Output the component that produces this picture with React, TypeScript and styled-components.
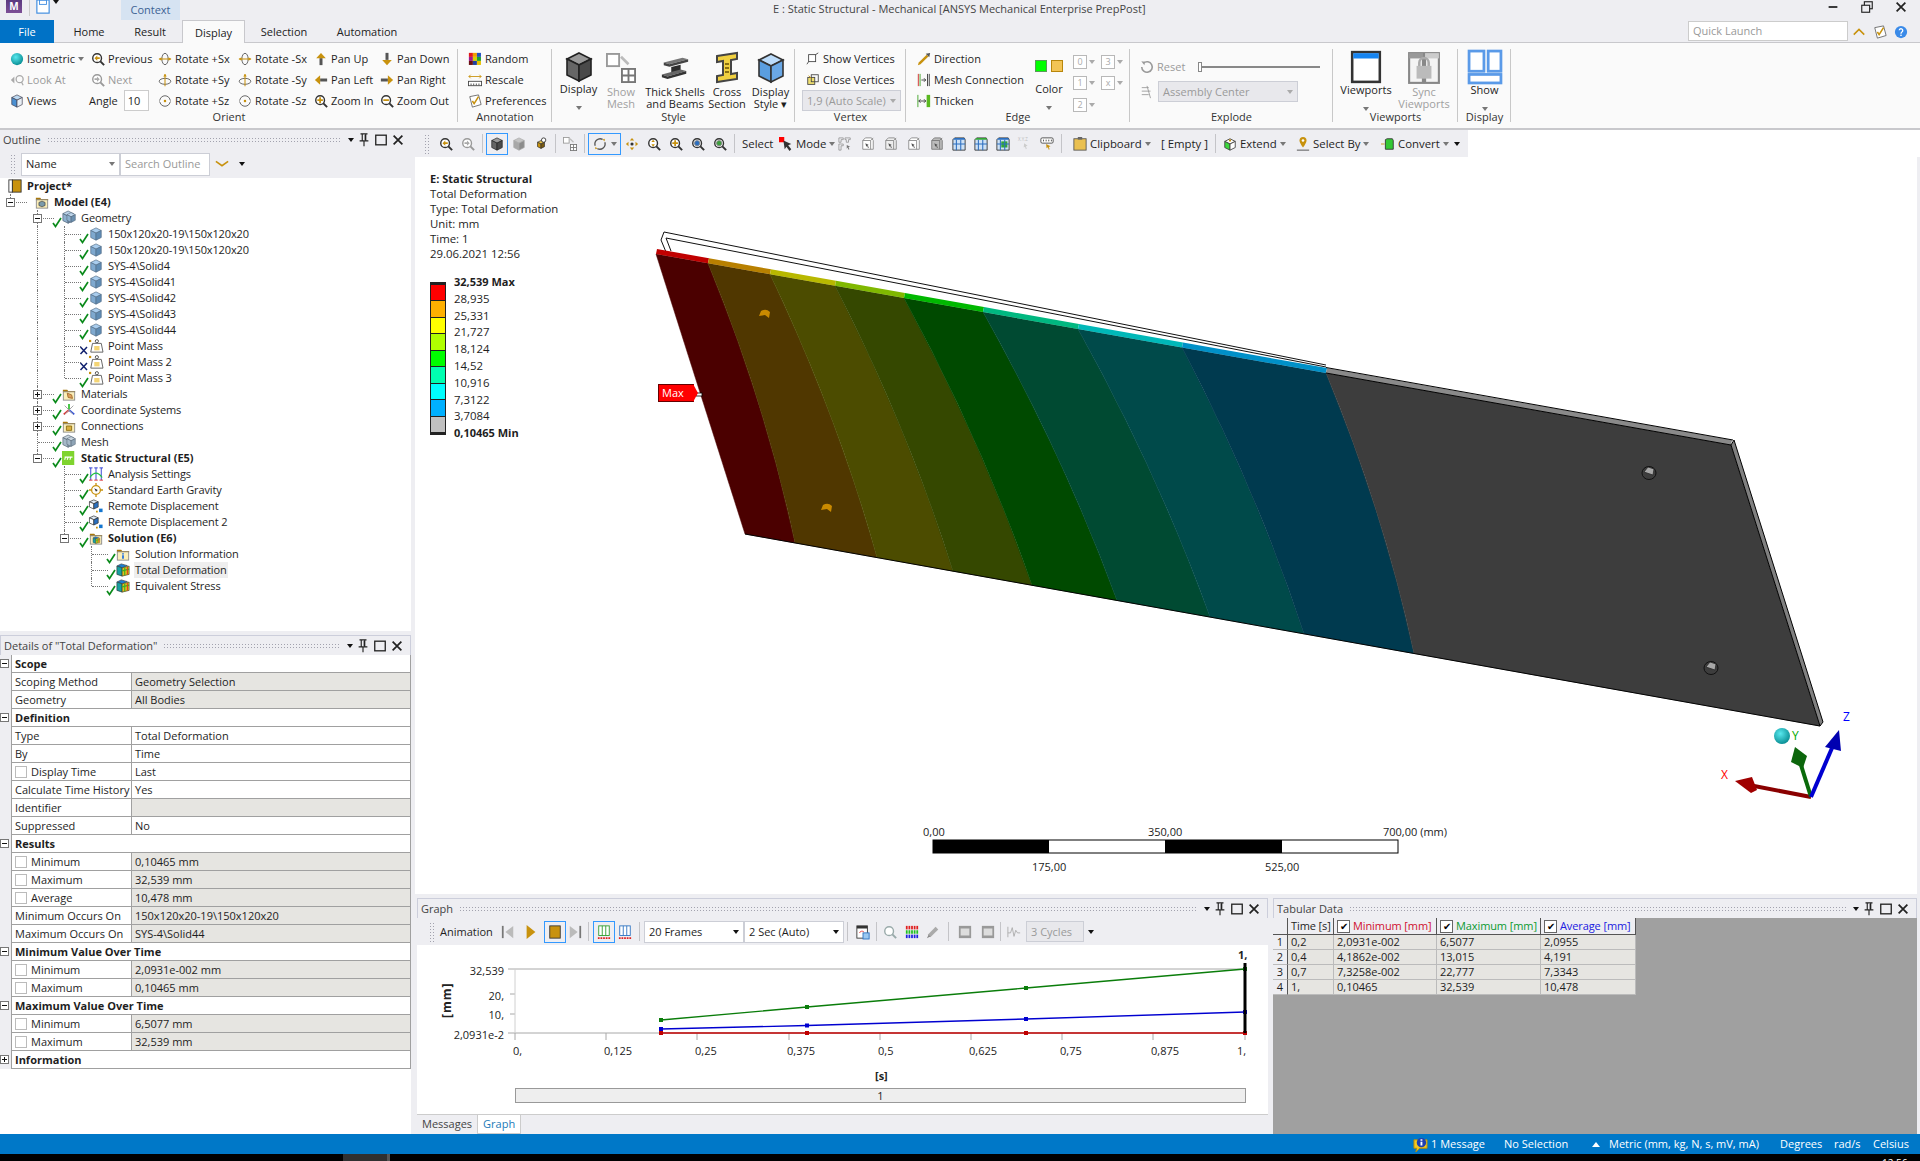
import React from "react";
import styled, { createGlobalStyle } from "styled-components";

const FONT = `"Open Sans", "Noto Sans", "Liberation Sans", sans-serif`;
const GOLD = "#c8920e";
const DARK = "#333";

const Global = createGlobalStyle`
  html, body { margin: 0; padding: 0; background: #eeeef2; }
  body { font: 11px/14px ${FONT}; color: #1e1e1e; overflow: hidden; }
  * { box-sizing: border-box; }
`;

const Shell = styled.div`
  width: 1920px;
  height: 1161px;
  display: flex;
  flex-direction: column;
  background: #eeeef2;
  overflow: hidden;
`;

/* ---------- icons ---------- */

const IconSvg = styled.svg<{ $s: number }>`
  width: ${(p) => p.$s}px;
  height: ${(p) => p.$s}px;
  flex: none;
  display: block;
  overflow: visible;
`;

const mag = (inner: React.ReactNode, c = DARK) => (
  <>
    <circle cx="7" cy="7" r="5" fill="#fff" stroke={c} strokeWidth="1.6" />
    <path d="M10.7 10.7L15 15" stroke={c} strokeWidth="2.2" />
    {inner}
  </>
);
const cube = (top: string, left: string, right: string, line = "#444") => (
  <>
    <path d="M8 1l6 3-6 3-6-3z" fill={top} stroke={line} strokeWidth=".8" />
    <path d="M2 4l6 3v8l-6-3z" fill={left} stroke={line} strokeWidth=".8" />
    <path d="M14 4l-6 3v8l6-3z" fill={right} stroke={line} strokeWidth=".8" />
  </>
);
const folder = (inner: React.ReactNode) => (
  <>
    <path d="M1 3h5l1 1.5h8V6H1z" fill="#a8780c" />
    <rect x="1.5" y="5.5" width="13" height="9.5" fill="#fbeeb8" stroke="#888" />
    {inner}
  </>
);
const rotX = (
  <>
    <ellipse cx="8" cy="8" rx="3.6" ry="6.5" fill="none" stroke="#555" />
    <path d="M1 8h14" stroke={GOLD} strokeWidth="1.2" />
    <path d="M1 8l3-2v4zM15 8l-3-2v4z" fill={GOLD} />
  </>
);
const rotY = (
  <>
    <ellipse cx="8" cy="9.5" rx="6.6" ry="3.4" fill="none" stroke="#555" />
    <path d="M8 1v14" stroke={GOLD} strokeWidth="1.2" />
    <path d="M8 1L6 4h4z" fill={GOLD} />
  </>
);
const rotZ = (
  <>
    <circle cx="8" cy="8" r="6" fill="none" stroke="#555" />
    <path d="M2 8h3M11 8h3" stroke="#fff" strokeWidth="2" />
    <circle cx="8" cy="8" r="1.4" fill={GOLD} />
  </>
);
const rainbow = (
  <>
    <path d="M6 1l7 2-6 2.5L1 3.5z" fill="#1c7fd0" stroke="#333" strokeWidth=".7" />
    <path d="M1 3.5l6 2V15l-6-2z" fill="#16a0a0" stroke="#333" strokeWidth=".7" />
    <path d="M7 5.5l8-2V13l-8 2z" fill="#e2c21b" stroke="#333" strokeWidth=".7" />
    <path d="M10 5v9M7 9l8-2" stroke="#3caf24" strokeWidth="1.3" />
    <path d="M13 4.5V13" stroke="#e23b1c" strokeWidth="1.2" />
  </>
);
const selectFrame = (fill: string, line: string) => (
  <>
    <path d="M2 4l3-3h7l2 3v10H2z" fill={fill} stroke={line} />
    <path d="M2 4h9l3-3M11 4v10" fill="none" stroke={line} />
    <path d="M5 7l4 2-1.500.5L9 12l-1 .5-1-2.500-1 1z" fill="#555" />
  </>
);
const barSet = (c: string) => (
  <>
    <rect x="2" y="1" width="12" height="11" fill="#fff" stroke={c} />
    <path d="M6 1v11M10 1v11" stroke={c} />
    <path d="M1 15h14" stroke="#e02020" strokeDasharray="2 1" strokeWidth="2" />
  </>
);
const partGrid = (top: string, dense?: boolean) => (
  <>
    <path d="M1 3l2-2h11l1 2v12H1z" fill="#cfe2f5" stroke="#333" />
    <path d="M3 1h11l1 2H1z" fill={top} />
    {dense && <rect x="6" y="5" width="7" height="7" fill="#33a833" />}
    <path d="M5 3v12M10 3v12M1 8h14" stroke="#2c6fc0" strokeWidth="1.200" />
  </>
);

const glyphs: Record<string, React.ReactNode> = {
  sphere: <circle cx="8" cy="8" r="7" fill="url(#sph)" />,
  prev: mag(<path d="M4 7l3.200-3v2H10v2H7.200v2z" fill={GOLD} />),
  next: mag(<path d="M10 7L6.800 4v2H4v2h2.800v2z" fill="#aaa" />, "#999"),
  zIn: mag(<path d="M6 3.800h2V6h2.200v2H8v2.200H6V8H3.800V6H6z" fill={GOLD} />),
  zOut: mag(<rect x="3.800" y="6" width="6.400" height="2" fill={GOLD} />),
  zFit: mag(<path d="M7 3l2 2.600H5zM7 11L5 8.400h4z" fill={GOLD} />),
  zBlue: mag(<circle cx="7" cy="7" r="3" fill="#2c6fc0" stroke="#888" />),
  zGreen: mag(<circle cx="7" cy="7" r="3" fill="#3ca03c" stroke="#888" />),
  rotSx: rotX,
  rotSy: rotY,
  rotSz: rotZ,
  panUp: <><rect x="6.300" y="7" width="3.400" height="8" fill="#555" /><path d="M8 1l5.500 6h-11z" fill={GOLD} /></>,
  panDown: <><rect x="6.300" y="1" width="3.400" height="8" fill="#555" /><path d="M8 15l5.500-6h-11z" fill={GOLD} /></>,
  panLeft: <><rect x="7" y="6.300" width="8" height="3.400" fill="#555" /><path d="M1 8l6-5.500v11z" fill={GOLD} /></>,
  panRight: <><rect x="1" y="6.300" width="8" height="3.400" fill="#555" /><path d="M15 8L9 2.500v11z" fill={GOLD} /></>,
  random: (
    <>
      {["#e01818", "#f0a000", "#2050c0", "#a01890", "#d8d000", "#20a030", "#6a1010", "#2040a0", "#e8c000"].map(
        (c, i) => (
          <rect key={i} x={1 + (i % 3) * 4.600} y={1 + Math.floor(i / 3) * 4.600} width="4.600" height="4.600" fill={c} />
        )
      )}
    </>
  ),
  rescale: (
    <>
      <path d="M1 4h14M1 4l2-2M1 4l2 2M15 4l-2-2M15 4l-2 2" stroke={GOLD} fill="none" />
      <rect x=".5" y="9.500" width="15" height="5" fill="#fff" stroke="#444" />
      <path d="M3.500 12v2M6.500 12v2M9.500 12v2M12.500 12v2" stroke="#444" />
    </>
  ),
  prefs: (
    <>
      <path d="M2 3l10-2 3 11-10 3z" fill="#fff" stroke="#666" />
      <path d="M5 8l2 3 5-8" fill="none" stroke={GOLD} strokeWidth="1.800" />
    </>
  ),
  views: cube("#bcd9f2", "#4a90d2", "#e8eef4", "#445"),
  lookAt: (
    <>
      <circle cx="11" cy="7" r="4" fill="none" stroke="#aaa" strokeWidth="1.500" />
      <path d="M1 8l4-4v8z" fill="#aaa" />
      <path d="M13 10l2 4" stroke="#aaa" strokeWidth="1.500" />
    </>
  ),
  cubeDark: cube("#9a9a9a", "#666", "#4a4a4a", "#222"),
  cubeGray: cube("#c4c4c4", "#a8a8a8", "#8c8c8c", "#aaa"),
  cubeParts: (
    <>
      <path d="M4 6l4-2 4 2-4 2z" fill="#e8c24a" stroke="#333" strokeWidth=".8" />
      <path d="M4 6v5l4 2V8z" fill={GOLD} stroke="#333" strokeWidth=".8" />
      <path d="M12 6v5l-4 2V8z" fill="#7a5a10" stroke="#333" strokeWidth=".8" />
      <circle cx="11" cy="3.500" r="2.500" fill="#fff" stroke="#333" />
    </>
  ),
  showMesh: (
    <>
      <rect x=".5" y=".5" width="6.500" height="6.500" fill="#fff" stroke="#999" />
      <rect x="8.500" y="8.500" width="7" height="7" fill="#fff" stroke="#777" />
      <path d="M12 8.500v7M8.500 12h7" stroke="#777" />
      <path d="M8 2l4 4" stroke="#bbb" strokeWidth="1.400" />
    </>
  ),
  rotate: (
    <>
      <path d="M2.500 10A6 6 0 0 1 11 2.800" fill="none" stroke="#555" strokeWidth="1.500" />
      <path d="M13.500 6A6 6 0 0 1 5 13.200" fill="none" stroke="#555" strokeWidth="1.500" />
      <path d="M11 2.800l2.500-.8-.3 3zM5 13.200l-2.500.8.3-3z" fill={GOLD} />
    </>
  ),
  pan: (
    <>
      <path d="M8 1l2.500 3h-5zM8 15l-2.500-3h5zM1 8l3-2.500v5zM15 8l-3 2.500v-5z" fill={GOLD} />
      <circle cx="8" cy="8" r="1.800" fill="#333" />
    </>
  ),
  mode: (
    <>
      <rect x="0" y="0" width="6" height="6" fill="#f00" />
      <path d="M5 4l9 4-3.500 1.500L14 14l-2 2-3.500-5L6.500 14z" fill="#333" />
    </>
  ),
  selGrid: (
    <>
      <path d="M1 1h5v2H3.500v3H1zM8 1h6v2h-2v3H9.500V3H8zM1 8h5v2H3.500v5H1z" fill="none" stroke="#888" strokeWidth=".8" />
      <path d="M10 9l4 2-2 .5 1 2.500-1 .5-1-2.500-1 1.500z" fill="#777" />
    </>
  ),
  sel0: selectFrame("#fff", "#888"),
  sel1: selectFrame("#eee", "#888"),
  sel3: selectFrame("#bbb", "#777"),
  gridBlue: partGrid("#2c6fc0"),
  gridGreen: partGrid("#33a833"),
  gridDense: partGrid("#2c6fc0", true),
  xyz: (
    <>
      <text x="0" y="5" fontSize="5" fill="#bbb" fontFamily={FONT}>X.Y.Z</text>
      <path d="M7 7l4 3-2 .5 1 3-1 .5-1-3-1.500 1z" fill="#ccc" />
    </>
  ),
  tag: (
    <>
      <rect x="1" y="1" width="14" height="6" rx="1.500" fill="#fff" stroke="#444" />
      <path d="M4 3v2M7 3v2M10 3v2M13 3v2" stroke="#444" />
      <path d="M7 8l5 2.500-2 .8 1 2.700-1 .5-1-2.700-1.500 1z" fill={GOLD} />
    </>
  ),
  clipboard: (
    <>
      <rect x="1" y="2" width="14" height="13" fill="#eac050" stroke="#555" />
      <rect x="5.500" y="0" width="5" height="3" fill="#666" />
    </>
  ),
  extend: (
    <>
      <path d="M8 2l6 3-6 3-6-3z" fill="#fff" stroke="#444" />
      <path d="M2 5l6 3v7l-6-3z" fill="#3cd83c" stroke="#444" />
      <path d="M14 5l-6 3v7l6-3z" fill="#fff" stroke="#444" />
      <circle cx="8" cy="4" r="1.300" fill={GOLD} />
    </>
  ),
  selectBy: (
    <>
      <path d="M8 0a4 4 0 0 1 4 4c0 3-4 8-4 8S4 7 4 4a4 4 0 0 1 4-4z" fill={GOLD} />
      <circle cx="8" cy="4" r="1.500" fill="#fff" />
      <path d="M1 15h14" stroke="#444" />
    </>
  ),
  convert: (
    <>
      <path d="M0 8h4" stroke={GOLD} />
      <path d="M5 3l2-1h6l1 2v10H5z" fill="#34c834" stroke="#333" />
    </>
  ),
  thickBeam: (
    <>
      <path d="M2 5l10-2.500 3 .8-10 2.700z" fill="#777" />
      <path d="M2 5v1.500l3 .8 10-2.700v-1.300L5 6z" fill="#444" />
      <path d="M6 7.500l5-1.300v4L6 11.500z" fill="#2c2c2c" />
      <path d="M1 11.500l10-2.700 3 .8-10 2.900z" fill="#666" />
      <path d="M1 11.500v1.400l3 .9 10-2.800V9.600L4 12.500z" fill="#333" />
    </>
  ),
  crossSec: (
    <>
      <path d="M3 2l10-1.500v3L10 4v7l3-.5v3L3 15v-3l3-.5v-7L3 5z" fill="#f0d040" stroke="#444" />
      <path d="M7 6h2M7 8h2M7 10h2" stroke="#8a7010" />
    </>
  ),
  displayStyle: cube("#bcdcfa", "#5a9ee0", "#6aa8e6", "#333"),
  vp: (
    <>
      <rect x="1.500" y="1" width="13" height="14" fill="#fff" stroke="#333" strokeWidth="1.200" />
      <rect x="2" y="1.500" width="12" height="2.500" fill="#1684f0" />
    </>
  ),
  sync: (
    <>
      <rect x="1" y="1" width="6.500" height="14" fill="#f4f4f4" stroke="#888" />
      <rect x="8.500" y="1" width="6.500" height="14" fill="#f4f4f4" stroke="#888" />
      <rect x="1" y="1" width="6.500" height="2.500" fill="#999" />
      <rect x="8.500" y="1" width="6.500" height="2.500" fill="#ccc" />
      <path d="M5.800 7V5.500a2.200 2.200 0 0 1 4.400 0V7" fill="none" stroke="#aaa" strokeWidth="1.200" />
      <rect x="4.500" y="7" width="7" height="6" fill="#bbb" />
    </>
  ),
  show: (
    <>
      <rect x=".5" y=".5" width="7" height="9.500" fill="#fff" stroke="#5a9ae8" strokeWidth="1.300" />
      <rect x="9.500" y=".5" width="6" height="9.500" fill="#fff" stroke="#5a9ae8" strokeWidth="1.300" />
      <rect x=".5" y="11.500" width="15" height="4" fill="#fff" stroke="#5a9ae8" strokeWidth="1.300" />
    </>
  ),
  showV: <><rect x="3" y="3" width="8" height="8" fill="#fff" stroke="#444" /><path d="M11 3l3-2M3 11l-2 3" stroke="#444" /></>,
  closeV: <><rect x="2" y="5" width="8" height="8" fill="#f0e070" stroke="#444" /><rect x="6" y="2" width="8" height="8" fill="none" stroke="#444" /><path d="M3 3l3 3" stroke={GOLD} /></>,
  direction: <><path d="M1 15l3-1 9-9-2-2-9 9z" fill={GOLD} /><path d="M10 2l5-1-1 5z" fill="#555" /></>,
  meshConn: <><path d="M1.500 1v14" stroke="#d02020" /><path d="M3.500 1v14" stroke="#3aa020" /><path d="M5 8h5M8 6l2 2-2 2" fill="none" stroke="#333" /><path d="M12 1v14M14 1v14" stroke="#333" /></>,
  thicken: <><path d="M1 1v14" stroke="#3aa020" /><path d="M2 8h8M2 8l2-2M2 8l2 2M10 8L8 6M10 8l-2 2" fill="none" stroke="#333" /><rect x="11" y="1" width="4" height="14" fill="#5ab820" /></>,
  reset: <><path d="M4 3.500A6 6 0 1 1 2 8" fill="none" stroke="#9a9a9a" strokeWidth="1.800" /><path d="M1.500 1.500l4 .5-.5 4z" fill="#9a9a9a" /></>,
  assembly: <><path d="M2 3h8M2 7h10M2 11h8M8 1l4 14" stroke="#9a9a9a" fill="none" /></>,
  project: <><rect x="1" y="1" width="4" height="14" fill="#fff" stroke="#333" /><rect x="5" y="1" width="10" height="14" fill={GOLD} stroke="#333" /></>,
  model: folder(<path d="M8 7l3.500 1.500v3.500L8 13.500 4.500 12V8.500z" fill="#7a9aaa" stroke="#333" strokeWidth=".7" />),
  geometry: <><g transform="translate(-1 -1)">{cube("#bcd4ea", "#8eb0ce", "#6c90b0", "#506478")}</g><g transform="translate(4 1) scale(.8)">{cube("#bcd4ea", "#8eb0ce", "#6c90b0", "#506478")}</g></>,
  part: cube("#a9cdee", "#7fa9cf", "#5f8cb4", "#55708a"),
  mass: (
    <>
      <circle cx="9" cy="2.500" r="1.800" fill="none" stroke="#444" />
      <path d="M4 5h10l2 10H2z" fill="#fff" stroke="#555" />
      <rect x="6" y="8" width="6" height="5" fill="#f4d474" />
      <rect x="0" y="1" width="2.500" height="2.500" fill={GOLD} />
    </>
  ),
  materials: folder(<path d="M6 7l5 2 1 4-5-1z" fill="#dca060" stroke="#a06828" />),
  coords: <><path d="M8 8V1" stroke="#30c030" strokeWidth="2" /><path d="M8 8L2 13" stroke="#e03030" strokeWidth="2" /><path d="M8 8l6 5" stroke="#3050e0" strokeWidth="2" /><path d="M3 3l10 10M13 3L3 13" stroke="#999" /></>,
  connections: folder(<path d="M5 8h6v5H5z" fill="#d8b040" stroke="#8a6a10" />),
  mesh: <><g transform="translate(-1 -1)">{cube("#c8d4de", "#a6b8c8", "#8ea4b6", "#5a6a78")}</g><g transform="translate(4 1) scale(.8)">{cube("#c8d4de", "#a6b8c8", "#8ea4b6", "#5a6a78")}</g></>,
  staticS: <><rect x="0" y="0" width="14" height="16" fill="#7fd42e" /><path d="M3 7h9M4 7l-1 3M7 7l-1 3M10 7l-1 3" stroke="#fff" strokeWidth="1.200" /></>,
  analysis: <><path d="M2 1v14M8 1v14M14 1v14M0 1h4M6 1h4M12 1h4" stroke="#2030d0" fill="none" /><path d="M0 15h4M6 15h4M12 15h4" stroke="#e02020" /><path d="M1 12Q8 2 15 12" fill="none" stroke="#20c040" strokeWidth="1.400" /></>,
  gravity: <><circle cx="8" cy="8" r="5" fill="#fff" stroke={GOLD} strokeWidth="1.500" /><path d="M8 0v3M8 13v3M0 8h3M13 8h3" stroke={GOLD} strokeWidth="1.500" /><path d="M6 6l4 2-2 2z" fill="#333" /></>,
  remote: (
    <>
      <path d="M5.500 1l5 2.200-5 2.200-5-2.200z" fill="#dfeaf5" stroke="#333" strokeWidth=".8" />
      <path d="M.5 3.200l5 2.200v6l-5-2.200z" fill="#fff" stroke="#333" strokeWidth=".8" />
      <path d="M10.500 3.200l-5 2.200v6l5-2.200z" fill="#2a70c0" stroke="#333" strokeWidth=".8" />
      <rect x="11.500" y="11" width="4" height="4" fill="#1476d0" />
      <rect x="8" y="13.400" width="2" height="2" fill={GOLD} />
    </>
  ),
  solution: folder(<g transform="translate(4 6) scale(.55)">{rainbow}</g>),
  info: folder(<path d="M7 7h2v1.500H7zM7 9.500h2v4H7z" fill="#2070e0" />),
  result: rainbow,
  msg: <><path d="M1 3h14v9H7l-4 4 1-4H1z" fill="#f6c81c" stroke="#b08c10" /><circle cx="9" cy="6" r="5" fill="#2040b0" /><path d="M8 5h2v4H8zM8 2.500h2v1.500H8z" fill="#fff" /></>,
  skipBack: <><rect x="1" y="1" width="2" height="14" fill="#777" /><path d="M14 1v14L5 8z" fill="#bbb" /></>,
  play: <path d="M3 0v16l10-8z" fill={GOLD} />,
  stop: <rect x="2" y="1" width="12" height="14" fill={GOLD} stroke="#333" />,
  skipFwd: <><rect x="13" y="1" width="2" height="14" fill="#777" /><path d="M2 1v14l9-7z" fill="#bbb" /></>,
  barsGreen: barSet("#2a9a2a"),
  barsBlue: barSet("#2a70c0"),
  film: <><rect x="1" y="1" width="12" height="14" fill="#fff" stroke="#333" /><rect x="1" y="1" width="12" height="3" fill="#333" /><rect x="8" y="9" width="7" height="7" fill="#9cc8f0" stroke="#2a70c0" /><path d="M4 9a3 3 0 0 1 5-1" fill="none" stroke="#e03030" /></>,
  zoomGray: mag(null, "#9aa"),
  colorGrid: <>{[0, 1, 2, 3, 4].map((c) => [0, 1, 2].map((r) => <rect key={`${c}${r}`} x={1 + c * 3} y={1 + r * 5} width="2" height="4" fill={["#e02020", "#20c020", "#2020e0"][r]} />))}</>,
  brush: <><path d="M2 11l9-9 3 3-9 9z" fill="#aaa" /><path d="M1 15l2-4 2 2z" fill="#888" /></>,
  filmGray: <><rect x="1" y="1" width="14" height="14" fill="#999" /><rect x="3" y="4" width="10" height="8" fill="#ddd" /></>,
  wave: <><path d="M1 2v12M1 9h3l2-6 2 10 2-7 2 3h3" fill="none" stroke="#aaa" /></>,
  pin: <><path d="M4 1h8M6 1v8M10 1v8M3 9h10M8 9v6" stroke="#222" strokeWidth="1.300" fill="none" /><path d="M9.500 2v6" stroke="#222" strokeWidth="1.600" /></>,
  maxi: <rect x="2" y="2.500" width="12" height="11" fill="none" stroke="#222" strokeWidth="1.500" />,
  closeX: <path d="M3 3l10 10M13 3L3 13" stroke="#222" strokeWidth="2" />,
  winMin: <rect x="3" y="7" width="10" height="2" fill="#222" />,
  winRes: <><rect x="5" y="2" width="9" height="8" fill="none" stroke="#222" strokeWidth="1.300" /><rect x="2" y="6" width="9" height="8" fill="#eeeef2" stroke="#222" strokeWidth="1.300" /></>,
  save: <><rect x="1" y="0" width="14" height="15" fill="#fff" stroke="#3a8ae0" strokeWidth="1.300" /><rect x="4" y="0" width="8" height="5" fill="none" stroke="#3a8ae0" /></>,
  help: <><circle cx="8" cy="8" r="7" fill="#3a8ae8" /><path d="M6 6a2 2 0 1 1 3 2c-.8.500-1 1-1 2" fill="none" stroke="#fff" strokeWidth="1.500" /><rect x="7.200" y="11" width="1.600" height="1.600" fill="#fff" /></>,
  chevGold: <path d="M2 11l6-6 6 6" fill="none" stroke={GOLD} strokeWidth="1.800" />,
  chevDown: <path d="M1 5l7 5 7-5" fill="none" stroke={GOLD} strokeWidth="1.800" />,
  ok: <path d="M0 5l2.500 3.500L8 0" fill="none" stroke="#0a8a1a" strokeWidth="1.700" />,
  no: <path d="M.5 1L7 8M7 1L.5 8" fill="none" stroke="#10206e" strokeWidth="1.500" />,
};

const Icon = ({ n, s = 14 }: { n: string; s?: number }) => (
  <IconSvg $s={s} viewBox="0 0 16 16">
    {glyphs[n]}
  </IconSvg>
);

const Caret = styled.span<{ $c?: string }>`
  display: inline-block;
  width: 0;
  height: 0;
  flex: none;
  border-left: 3.5px solid transparent;
  border-right: 3.5px solid transparent;
  border-top: 4px solid ${(p) => p.$c ?? "#777"};
`;

const BlackCaret = styled(Caret)`
  border-top-color: #111;
`;

/* ---------- title bar and tabs ---------- */

const TitleBar = styled.header`
  height: 20px;
  flex: none;
  display: flex;
  align-items: flex-start;
  position: relative;
`;

const Logo = styled.span`
  width: 16px;
  height: 13px;
  margin-left: 6px;
  background: linear-gradient(#5a3a80, #7d4f96);
  color: #fff;
  font: bold 10px/13px ${FONT};
  text-align: center;
`;

const QuickSep = styled.span`
  width: 1px;
  height: 16px;
  margin: 0 6px 0 7px;
  background: #ccc;
`;

const QuickRow = styled.div`
  display: flex;
  align-items: flex-start;
  gap: 3px;
  width: 85px;
`;

const ContextTab = styled.div`
  width: 59px;
  height: 20px;
  background: #d6e3f2;
  color: #3d6294;
  text-align: center;
  line-height: 20px;
`;

const Title = styled.div`
  position: absolute;
  left: 773px;
  width: 368px;
  top: 1px;
  text-align: center;
  white-space: nowrap;
  color: #444;
  line-height: 16px;
`;

const WinButtons = styled.div`
  margin-left: auto;
  margin-right: 12px;
  display: flex;
  gap: 20px;
`;

const TabRow = styled.nav`
  height: 23px;
  flex: none;
  display: flex;
  align-items: stretch;
  position: relative;
  z-index: 1;
  margin-bottom: -1px;
`;

const FileTab = styled.div`
  width: 54px;
  background: #0072c6;
  color: #fff;
  text-align: center;
  line-height: 23px;
`;

const Tab = styled.div<{ $w: number; $ml?: number; $on?: boolean }>`
  width: ${(p) => p.$w}px;
  margin-left: ${(p) => p.$ml ?? 0}px;
  text-align: center;
  line-height: 24px;
  color: #222;
  ${(p) => p.$on && `background:#fafafa;border:1px solid #c8c8cc;border-bottom:0;`}
`;

const TabSpring = styled.div`
  flex: 1;
`;

const QuickLaunch = styled.div`
  width: 160px;
  height: 20px;
  margin: 1px 4px 0 0;
  padding-left: 4px;
  background: #fff;
  border: 1px solid #ccc;
  color: #999;
  line-height: 18px;
`;

const TabTools = styled.div`
  width: 68px;
  display: flex;
  align-items: center;
  gap: 7px;
`;

/* ---------- ribbon ---------- */

const Ribbon = styled.section`
  height: 88px;
  flex: none;
  display: flex;
  background: #fafafa;
  border-top: 1px solid #c8c8cc;
  border-bottom: 2px solid #c8c8cc;
  letter-spacing: 0.03px;
`;

const Group = styled.div<{ $w: number }>`
  width: ${(p) => p.$w}px;
  flex: none;
  padding-top: 5px;
  display: flex;
  flex-direction: column;
  background: linear-gradient(#c8c8c8, #c8c8c8) right 6px / 1px 73px no-repeat;
`;

const GroupBody = styled.div`
  height: 63px;
  display: flex;
`;

const GroupLabel = styled.div`
  height: 12px;
  line-height: 12px;
  text-align: center;
  color: #333;
`;

const OrientGrid = styled.div`
  display: grid;
  height: 63px;
  grid-template-columns: 81px 67px 80px 76px 66px auto;
  padding-left: 10px;
`;

const Cmd = styled.div<{ $off?: boolean; $pad?: number }>`
  display: flex;
  align-items: center;
  gap: 3px;
  height: 21px;
  white-space: nowrap;
  padding-left: ${(p) => p.$pad ?? 0}px;
  color: ${(p) => (p.$off ? "#9a9a9a" : "#1e1e1e")};
`;

const AngleCmd = styled(Cmd)`
  margin-left: -2px;
`;

const AngleBox = styled.span`
  width: 25px;
  height: 21px;
  margin-left: 3px;
  padding-left: 3px;
  background: #fff;
  border: 1px solid #ccc;
  line-height: 19px;
`;

const Column = styled.div<{ $pad?: number; $w?: number }>`
  display: flex;
  flex-direction: column;
  flex: none;
  padding-left: ${(p) => p.$pad ?? 0}px;
  ${(p) => p.$w && `width:${p.$w}px;`}
`;

const Big = styled.div<{ $w: number; $off?: boolean }>`
  width: ${(p) => p.$w}px;
  flex: none;
  display: flex;
  flex-direction: column;
  align-items: center;
  text-align: center;
  line-height: 11.5px;
  color: ${(p) => (p.$off ? "#a0a0a0" : "#1e1e1e")};
`;

const BigIcon = styled.div`
  height: 38px;
  padding-top: 2px;
  display: flex;
  align-items: center;
  justify-content: center;
`;

const BigCaret = styled.div`
  margin-top: 5px;
`;

const Combo = styled.div<{ $w: number; $ml?: number }>`
  width: ${(p) => p.$w}px;
  height: 21px;
  margin-left: ${(p) => p.$ml ?? 0}px;
  padding: 0 4px;
  display: flex;
  align-items: center;
  justify-content: space-between;
  background: #e8e8ec;
  border: 1px solid #ccced6;
  color: #9a9a9a;
  white-space: nowrap;
`;

const ColorSwatches = styled.div`
  height: 27px;
  padding-top: 12px;
  margin-bottom: 10px;
  display: flex;
  gap: 4px;
`;

const Swatch = styled.span<{ $c: string; $b: string }>`
  width: 12px;
  height: 12px;
  background: ${(p) => p.$c};
  border: 1px solid ${(p) => p.$b};
`;

const NumGrid = styled.div`
  display: grid;
  grid-template-columns: 28px 28px;
  grid-auto-rows: 21.500px;
  padding-top: 3px;
`;

const NumBox = styled.div`
  display: flex;
  align-items: center;
  gap: 2px;
`;

const NumFace = styled.span`
  width: 14px;
  height: 14px;
  background: #fff;
  border: 1px solid #b8b8b8;
  color: #aaa;
  font-size: 9px;
  line-height: 12px;
  text-align: center;
`;

const ExplodeTop = styled.div`
  display: flex;
  align-items: center;
  height: 21px;
  margin-top: 8px;
  padding-left: 10px;
  gap: 3px;
  color: #9a9a9a;
`;

const Slider = styled.div`
  width: 122px;
  height: 2px;
  margin-left: 10px;
  background: #888;
  position: relative;
`;

const SliderThumb = styled.span`
  position: absolute;
  left: 0;
  top: -4px;
  width: 4px;
  height: 10px;
  background: #fff;
  border: 1px solid #888;
`;

const ExplodeBottom = styled.div`
  display: flex;
  align-items: center;
  height: 21px;
  margin-top: 4px;
  padding-left: 10px;
`;

/* ---------- workspace ---------- */

const Workspace = styled.main`
  flex: 1;
  min-height: 0;
  display: flex;
`;

const LeftColumn = styled.aside`
  width: 411px;
  flex: none;
  display: flex;
  flex-direction: column;
`;

const PanelHead = styled.div<{ $border?: boolean }>`
  height: 20px;
  flex: none;
  display: flex;
  align-items: center;
  gap: 4px;
  padding: 0 3px;
  color: #444;
  white-space: nowrap;
  ${(p) => p.$border && `border-top:1px solid #cccedb;border-left:1px solid #cccedb;border-right:1px solid #cccedb;`}
`;

const Grip = styled.span`
  flex: 1;
  height: 6px;
  margin-left: 2px;
  background-image: radial-gradient(#a2a2ae 0.7px, transparent 0.9px);
  background-size: 3px 3px;
`;

const HeadTools = styled.span`
  display: flex;
  align-items: center;
  gap: 3px;
  margin-right: 3px;
  margin-left: 2px;
`;

const PanelControls = () => (
  <HeadTools>
    <BlackCaret />
    <Icon n="pin" />
    <Icon n="maxi" />
    <Icon n="closeX" />
  </HeadTools>
);

const OutlineBar = styled.div`
  height: 28px;
  flex: none;
  display: flex;
  align-items: center;
  padding-left: 10px;
`;

const VGrip = styled.span`
  width: 6px;
  height: 20px;
  margin-right: 5px;
  flex: none;
  background-image: radial-gradient(#a2a2ae 0.7px, transparent 0.9px);
  background-size: 3px 3px;
`;

const Field = styled.div<{ $w: number; $muted?: boolean }>`
  width: ${(p) => p.$w}px;
  height: 23px;
  flex: none;
  padding: 0 4px;
  display: flex;
  align-items: center;
  justify-content: space-between;
  background: #fff;
  border: 1px solid #ccced6;
  color: ${(p) => (p.$muted ? "#999" : "#1e1e1e")};
`;

const Tree = styled.div`
  height: 453px;
  flex: none;
  background: #fff;
  overflow: hidden;
`;

const TreeRow = styled.div`
  height: 16px;
  display: flex;
  align-items: center;
  white-space: nowrap;
`;

const Cell = styled.span<{ $k: string }>`
  width: 27px;
  height: 16px;
  flex: none;
  position: relative;
  &::before {
    content: "";
    position: absolute;
    left: 10px;
    top: 0;
    height: ${(p) => ("|T-+".includes(p.$k) ? 16 : "Lm".includes(p.$k) ? 8 : 0)}px;
    border-left: 1px dotted #777;
  }
  &::after {
    content: "";
    position: absolute;
    left: 11px;
    top: 8px;
    width: ${(p) => ("TL-+m".includes(p.$k) ? 16 : 0)}px;
    border-top: 1px dotted #777;
  }
`;

const ToggleBox = styled.span<{ $plus?: boolean }>`
  position: absolute;
  z-index: 1;
  left: 6px;
  top: 4px;
  width: 9px;
  height: 9px;
  background: #fff;
  border: 1px solid #777;
  &::before {
    content: "";
    position: absolute;
    left: 1px;
    top: 3px;
    width: 5px;
    height: 1px;
    background: #111;
  }
  ${(p) =>
    p.$plus &&
    `&::after{content:"";position:absolute;left:3px;top:1px;width:1px;height:5px;background:#111;}`}
`;

const StatusSlot = styled.span`
  width: 8px;
  height: 16px;
  flex: none;
  position: relative;
`;

const StatusMark = styled.span`
  position: absolute;
  left: -1px;
  top: 8px;
`;

const NodeText = styled.span<{ $bold?: boolean; $sel?: boolean }>`
  margin-left: 4px;
  padding: 0 1px;
  line-height: 16px;
  letter-spacing: ${(p) => (p.$bold ? 0 : -0.12)}px;
  font-weight: ${(p) => (p.$bold ? 700 : 400)};
  background: ${(p) => (p.$sel ? "#eeeeee" : "transparent")};
`;

type Node = { c: string; st?: "ok" | "no"; i: string; t: string; b?: boolean; sel?: boolean };

const nodes: Node[] = [
  { c: "", i: "project", t: "Project*", b: true },
  { c: "m", i: "model", t: "Model (E4)", b: true },
  { c: " -", st: "ok", i: "geometry", t: "Geometry" },
  { c: " |T", st: "ok", i: "part", t: "150x120x20-19\\150x120x20" },
  { c: " |T", st: "ok", i: "part", t: "150x120x20-19\\150x120x20" },
  { c: " |T", st: "ok", i: "part", t: "SYS-4\\Solid4" },
  { c: " |T", st: "ok", i: "part", t: "SYS-4\\Solid41" },
  { c: " |T", st: "ok", i: "part", t: "SYS-4\\Solid42" },
  { c: " |T", st: "ok", i: "part", t: "SYS-4\\Solid43" },
  { c: " |T", st: "ok", i: "part", t: "SYS-4\\Solid44" },
  { c: " |T", st: "no", i: "mass", t: "Point Mass" },
  { c: " |T", st: "no", i: "mass", t: "Point Mass 2" },
  { c: " |L", st: "ok", i: "mass", t: "Point Mass 3" },
  { c: " +", st: "ok", i: "materials", t: "Materials" },
  { c: " +", st: "ok", i: "coords", t: "Coordinate Systems" },
  { c: " +", st: "ok", i: "connections", t: "Connections" },
  { c: " T", st: "ok", i: "mesh", t: "Mesh" },
  { c: " m", st: "ok", i: "staticS", t: "Static Structural (E5)", b: true },
  { c: "  T", st: "ok", i: "analysis", t: "Analysis Settings" },
  { c: "  T", st: "ok", i: "gravity", t: "Standard Earth Gravity" },
  { c: "  T", st: "ok", i: "remote", t: "Remote Displacement" },
  { c: "  T", st: "ok", i: "remote", t: "Remote Displacement 2" },
  { c: "  m", st: "ok", i: "solution", t: "Solution (E6)", b: true },
  { c: "   T", st: "ok", i: "info", t: "Solution Information" },
  { c: "   T", st: "ok", i: "result", t: "Total Deformation", sel: true },
  { c: "   L", st: "ok", i: "result", t: "Equivalent Stress" },
];

const GapBar = styled.div`
  height: 4px;
  flex: none;
`;

const Details = styled.div`
  flex: 1;
  background: #fff;
`;

const DetailRow = styled.div`
  height: 18px;
  display: flex;
`;

const RowToggle = styled.span`
  width: 11px;
  flex: none;
  position: relative;
  background: #eeeef2;
`;

const DetailToggle = styled(ToggleBox)`
  left: 0;
  top: 4px;
`;

const GroupCell = styled.div`
  flex: 1;
  padding-left: 3px;
  font-weight: 700;
  line-height: 17px;
  border: 1px solid #a0a0a0;
  border-top: 0;
`;

const LabelCell = styled.div`
  width: 120px;
  flex: none;
  display: flex;
  align-items: center;
  padding-left: 3px;
  white-space: nowrap;
  border: 1px solid #a0a0a0;
  border-top: 0;
  border-right: 0;
`;

const ValueCell = styled.div<{ $white?: boolean }>`
  flex: 1;
  padding-left: 3px;
  line-height: 17px;
  background: ${(p) => (p.$white ? "#fff" : "#e6e5e1")};
  border: 1px solid #a0a0a0;
  border-top: 0;
  white-space: nowrap;
`;

const CheckSquare = styled.span`
  width: 12px;
  height: 12px;
  margin-right: 4px;
  flex: none;
  background: #fff;
  border: 1px solid #bbb;
`;

type DRow = { g?: string; plus?: boolean; l?: string; v?: string; ck?: boolean; white?: boolean };

const dRows: DRow[] = [
  { g: "Scope" },
  { l: "Scoping Method", v: "Geometry Selection" },
  { l: "Geometry", v: "All Bodies" },
  { g: "Definition" },
  { l: "Type", v: "Total Deformation", white: true },
  { l: "By", v: "Time", white: true },
  { l: "Display Time", v: "Last", ck: true, white: true },
  { l: "Calculate Time History", v: "Yes", white: true },
  { l: "Identifier", v: "" },
  { l: "Suppressed", v: "No", white: true },
  { g: "Results" },
  { l: "Minimum", v: "0,10465 mm", ck: true },
  { l: "Maximum", v: "32,539 mm", ck: true },
  { l: "Average", v: "10,478 mm", ck: true },
  { l: "Minimum Occurs On", v: "150x120x20-19\\150x120x20" },
  { l: "Maximum Occurs On", v: "SYS-4\\Solid44" },
  { g: "Minimum Value Over Time" },
  { l: "Minimum", v: "2,0931e-002 mm", ck: true },
  { l: "Maximum", v: "0,10465 mm", ck: true },
  { g: "Maximum Value Over Time" },
  { l: "Minimum", v: "6,5077 mm", ck: true },
  { l: "Maximum", v: "32,539 mm", ck: true },
  { g: "Information", plus: true },
];

const Center = styled.div`
  flex: 1;
  min-width: 0;
  display: flex;
  flex-direction: column;
  background: #eeeef2;
`;

const ViewRow = styled.div`
  height: 27px;
  flex: none;
  background: #fff;
`;

const ViewBar = styled.div`
  height: 27px;
  width: 1057px;
  display: flex;
  align-items: center;
  padding-left: 13px;
  background: #eeeef2;
  white-space: nowrap;
  font-size: 11.4px;
`;

const ToolSlot = styled.span<{ $w: number; $on?: boolean }>`
  width: ${(p) => p.$w}px;
  height: 22px;
  flex: none;
  display: flex;
  align-items: center;
  justify-content: center;
  gap: 4px;
  ${(p) => p.$on && `border:1px solid #3399ff;`}
`;

const ToolSep = styled.span<{ $m?: number }>`
  width: 1px;
  height: 19px;
  flex: none;
  margin: 0 ${(p) => p.$m ?? 3}px;
  background: #c4c4c8;
`;

const ToolText = styled.span<{ $ml?: number; $w?: number }>`
  margin-left: ${(p) => p.$ml ?? 0}px;
  display: inline-flex;
  align-items: center;
  gap: 3px;
  flex: none;
  ${(p) => p.$w && `width:${p.$w}px;`}
`;

const Viewport = styled.div`
  height: 737px;
  flex: none;
  margin: 0 3px 0 4px;
  position: relative;
  background: #fff;
  overflow: hidden;
`;

const Scene = styled.svg`
  display: block;
  width: 1502px;
  height: 737px;
`;

const Legend = styled.div`
  position: absolute;
  left: 15px;
  top: 14px;
  line-height: 15px;
  font-size: 11.4px;
`;

const LegendTitle = styled.div`
  font-size: 11px;
  font-weight: 700;
`;

const LegendScale = styled.div`
  display: flex;
  margin-top: 13px;
`;

const ColorBar = styled.div`
  width: 16px;
  height: 153px;
  margin-top: 8px;
  display: flex;
  flex-direction: column;
  border: 1px solid #222;
  border-top-width: 3px;
  border-bottom-width: 3px;
`;

const ColorStep = styled.span<{ $c: string }>`
  flex: 1;
  background: ${(p) => p.$c};
  border-bottom: 1px solid #222;
  &:last-child {
    border-bottom: 0;
  }
`;

const LegendValues = styled.div`
  margin-left: 8px;
`;

const LegendValue = styled.div<{ $b?: boolean }>`
  height: 16.8px;
  line-height: 16.8px;
  font-size: ${(p) => (p.$b ? 11 : 11.4)}px;
  font-weight: ${(p) => (p.$b ? 700 : 400)};
`;

const MaxFlag = styled.div`
  position: absolute;
  left: 243px;
  top: 227px;
  width: 36px;
  height: 18px;
  padding-left: 3px;
  color: #fff;
  background: #f00;
  border: 1px solid #600;
  border-right: 0;
  line-height: 16px;
  &::after {
    content: "";
    position: absolute;
    left: 34px;
    top: -1px;
    border-top: 9px solid transparent;
    border-bottom: 9px solid transparent;
    border-left: 5px solid #f00;
  }
`;

const Dock = styled.div`
  height: 240px;
  flex: none;
  padding: 4px 3px 0 6px;
  display: flex;
  gap: 5px;
`;

const GraphPanel = styled.section`
  width: 851px;
  flex: none;
  display: flex;
  flex-direction: column;
`;

const GraphBar = styled.div`
  height: 27px;
  flex: none;
  display: flex;
  align-items: center;
  padding-left: 12px;
  white-space: nowrap;
`;

const GraphCombo = styled(Field)`
  height: 22px;
`;

const GraphBody = styled.div`
  height: 170px;
  flex: none;
  background: #fff;
  border-bottom: 1px solid #ccc;
`;

const Chart = styled.svg`
  display: block;
  width: 851px;
  height: 143px;
`;

const TimeBar = styled.div`
  height: 15px;
  margin: 0 22px 0 98px;
  background: #eeeeee;
  border: 1px solid #999;
  text-align: center;
  line-height: 13px;
`;

const TabStrip = styled.div`
  flex: 1;
  display: flex;
  align-items: stretch;
`;

const DockTab = styled.div<{ $on?: boolean }>`
  padding: 0 5px;
  line-height: 18px;
  color: ${(p) => (p.$on ? "#1c7ab8" : "#444")};
  ${(p) => p.$on && `background:#fff;border:1px solid #ccc;border-top:0;`}
`;

const TablePanel = styled.section`
  flex: 1;
  display: flex;
  flex-direction: column;
`;

const TableArea = styled.div`
  flex: 1;
  background: #a0a0a0;
`;

const DataGrid = styled.div`
  display: grid;
  width: 363px;
  grid-template-columns: 15px 46px 103px 104px 95px;
  grid-template-rows: 17px repeat(4, 15px);
`;

const HeadCell = styled.div<{ $c?: string }>`
  display: flex;
  align-items: center;
  gap: 3px;
  padding-left: 3px;
  background: #eeeef2;
  letter-spacing: -0.1px;
  color: ${(p) => p.$c ?? "#1e1e1e"};
  border-right: 1px solid #555;
  border-bottom: 1px solid #555;
  white-space: nowrap;
`;

const TinyCheck = styled.span`
  width: 13px;
  height: 13px;
  flex: none;
  background: #fff;
  border: 1px solid #666;
  color: #000;
  font-size: 10px;
  line-height: 11px;
  text-align: center;
`;

const NumCell = styled.div`
  background: #eeeef2;
  border-right: 1px solid #555;
  border-bottom: 1px solid #bbb;
  text-align: center;
  line-height: 14px;
`;

const DataCell = styled.div`
  background: #e6e5e1;
  padding-left: 3px;
  line-height: 14px;
  border-right: 1px solid #bbb;
  border-bottom: 1px solid #bbb;
`;

const StatusBar = styled.footer`
  height: 20px;
  flex: none;
  display: flex;
  align-items: center;
  background: #0078c8;
  color: #fff;
  white-space: nowrap;
  padding-left: 1413px;
`;

const StatusItem = styled.span<{ $w: number }>`
  width: ${(p) => p.$w}px;
  flex: none;
  display: flex;
  align-items: center;
  gap: 3px;
`;

const UpTri = styled.span`
  width: 0;
  height: 0;
  margin-right: 6px;
  border-left: 4px solid transparent;
  border-right: 4px solid transparent;
  border-bottom: 5px solid #fff;
`;

const Taskbar = styled.div`
  height: 7px;
  flex: none;
  display: flex;
  background: #000;
  overflow: hidden;
  position: relative;
`;

const TaskBlock = styled.span`
  width: 47px;
  margin-left: 343px;
  background: #303030;
  border-right: 3px solid #555;
`;

const Clock = styled.span`
  position: absolute;
  left: 1882px;
  top: 4px;
  color: #fff;
  font-size: 10px;
  line-height: 11px;
`;

/* ---------- the plate ---------- */

const topX = [656, 708, 770, 835, 904, 983, 1078, 1182, 1326, 1731];
const botX = [745, 795, 877, 953, 1032, 1117, 1210, 1304, 1414, 1820];
const faces = ["#4b0000", "#503700", "#4c4c00", "#354800", "#004a00", "#004a32", "#004a4a", "#003a4f", "#3d3d3d"];
const rims = ["#c00000", "#b88000", "#b8b800", "#80b800", "#00b800", "#00b880", "#00b8b8", "#0090c8", "#8a8a8a"];
const topY = (x: number) => 254 + (x - 656) * 0.1777;
const botY = (x: number) => 534 + (x - 745) * 0.1786;
const seam = (i: number) => {
  const tx = topX[i], bx = botX[i];
  return { tx, ty: topY(tx), bx, by: botY(bx), cx: (tx + bx) / 2 + 14, cy: (topY(tx) + botY(bx)) / 2 };
};

const ScaleText = styled.text`
  font: 11px ${FONT};
  fill: #222;
`;

const TriadText = styled.text`
  font: 12px ${FONT};
`;

const ChartText = styled.text<{ $bold?: boolean }>`
  font: ${(p) => (p.$bold ? 700 : 400)} 11px ${FONT};
  fill: #222;
`;

const AxisUnit = styled(ChartText)`
  font-size: 12px;
  letter-spacing: 1px;
`;

const Plate = () => (
  <Scene viewBox="415 157 1502 737">
    <defs>
      <radialGradient id="sph" cx="40%" cy="35%" r="70%">
        <stop offset="0" stopColor="#58e8ee" />
        <stop offset="1" stopColor="#068a90" />
      </radialGradient>
    </defs>
    <path d="M664 232L1326 365M666 238L1326 367M664 232L661 240L666 252M666 238L671 251" fill="none" stroke="#111" />
    {faces.map((c, i) => {
      const a = seam(i), b = seam(i + 1);
      const last = i === faces.length - 1;
      const rightSide = last ? `L${b.tx} ${b.ty}` : `Q${b.cx} ${b.cy} ${b.tx} ${b.ty}`;
      const leftSide = i === 0 ? `L${a.bx} ${a.by}` : `Q${a.cx} ${a.cy} ${a.bx} ${a.by}`;
      return (
        <g key={c}>
          <path d={`M${a.tx} ${a.ty}${leftSide}L${b.bx} ${b.by}${rightSide}Z`} fill={c} stroke={c} strokeWidth=".5" />
          <path d={`M${a.tx} ${a.ty}L${a.tx + 1} ${a.ty - 5}L${b.tx + 1} ${b.ty - 5}L${b.tx} ${b.ty}Z`} fill={rims[i]} />
        </g>
      );
    })}
    <path d="M1731 445L1734 440L1823 722L1820 726Z" fill="#808080" stroke="#000" />
    <path d="M1326 367.500L1733 440M745 534L1820 726" fill="none" stroke="#000" />
    <path d="M1326 373L1731 445" stroke="#000" />
    <path d="M761 311q5-3 9 1l-1 6-4-3-6 1z" fill="#c98a00" />
    <path d="M823 505q5-3 9 1l-1 6-4-3-6 1z" fill="#c98a00" />
    {[[1649, 473], [1711, 668]].map(([x, y]) => (
      <g key={x}>
        <ellipse cx={x} cy={y} rx="7" ry="6.500" fill="#3d3d3d" stroke="#111" />
        <path d={`M${x - 5} ${y - 1}l4-5 6 2-1 6z`} fill="#a8a8a8" stroke="#222" strokeWidth=".7" />
      </g>
    ))}
    <rect x="696" y="393" width="6" height="3" fill="#fff" stroke="#000" strokeWidth=".8" />

    <rect x="933" y="840" width="465" height="13" fill="#fff" stroke="#000" />
    <rect x="933" y="840" width="116" height="13" fill="#000" />
    <rect x="1165" y="840" width="117" height="13" fill="#000" />
    <ScaleText x="923" y="836">0,00</ScaleText>
    <ScaleText x="1148" y="836">350,00</ScaleText>
    <ScaleText x="1383" y="836">700,00 (mm)</ScaleText>
    <ScaleText x="1032" y="871">175,00</ScaleText>
    <ScaleText x="1265" y="871">525,00</ScaleText>

    <circle cx="1782" cy="736" r="8" fill="url(#sph)" />
    <path d="M1811 797L1749 785" stroke="#8a0000" strokeWidth="4" />
    <path d="M1735 781L1752 777L1757 790L1751 793Z" fill="#a00000" />
    <path d="M1811 797L1800 762" stroke="#0a6a0a" strokeWidth="4" />
    <path d="M1795 747L1807 756L1803 768L1791 762Z" fill="#0c660c" />
    <path d="M1811 797L1832 748" stroke="#0000d0" strokeWidth="4" />
    <path d="M1839 730L1841 751L1825 747Z" fill="#0000b0" />
    <TriadText x="1721" y="779" fill="#f00">X</TriadText>
    <TriadText x="1792" y="740" fill="#0a0">Y</TriadText>
    <TriadText x="1843" y="721" fill="#00f">Z</TriadText>
  </Scene>
);

const ticks = [
  ["0,", 515], ["0,125", 606], ["0,25", 697], ["0,375", 789], ["0,5", 880],
  ["0,625", 971], ["0,75", 1062], ["0,875", 1153], ["1,", 1245],
] as const;
const tx = [661, 807, 1026, 1245];
const series: [string, number[]][] = [
  ["#0a7d0a", [1020, 1007, 988, 969]],
  ["#0000d0", [1029, 1025.500, 1019, 1012]],
  ["#c00000", [1033, 1033, 1033, 1033]],
];

const GraphChart = () => (
  <Chart viewBox="417 945 851 143">
    <path d="M508 969H1245M508 1033H1245M510 994H515M510 1014H515" stroke="#a8a8a8" fill="none" />
    <path d="M515 969V1033" stroke="#d0d0d0" />
    {ticks.map(([, x]) => (
      <path key={x} d={`M${x} 1033V1040`} stroke="#a8a8a8" />
    ))}
    {series.map(([c, ys]) => (
      <g key={c}>
        <polyline points={ys.map((y, i) => `${tx[i]},${y}`).join(" ")} fill="none" stroke={c} strokeWidth="1.400" />
        {ys.map((y, i) => (
          <rect key={i} x={tx[i] - 2} y={y - 2} width="4" height="4" fill={c} />
        ))}
      </g>
    ))}
    <path d="M1245 963V1033" stroke="#000" strokeWidth="3" />
    <ChartText x="1238" y="959" $bold>1,</ChartText>
    <ChartText x="504" y="975" textAnchor="end">32,539</ChartText>
    <ChartText x="504" y="1000" textAnchor="end">20,</ChartText>
    <ChartText x="504" y="1019" textAnchor="end">10,</ChartText>
    <ChartText x="504" y="1039" textAnchor="end">2,0931e-2</ChartText>
    {ticks.map(([t, x]) => (
      <ChartText key={t} x={t === "1," ? x - 8 : x - 2} y="1055">{t}</ChartText>
    ))}
    <ChartText x="875" y="1080" $bold>[s]</ChartText>
    <AxisUnit x="451" y="1018" $bold transform="rotate(-90 451 1018)">[mm]</AxisUnit>
  </Chart>
);

const legendColors = ["#ff0000", "#ffb000", "#ffff00", "#b0ff00", "#00ff00", "#00ffb0", "#00ffff", "#00b0ff", "#c0c0c0"];
const legendVals = ["32,539 Max", "28,935", "25,331", "21,727", "18,124", "14,52", "10,916", "7,3122", "3,7084", "0,10465 Min"];

const tableRows = [
  ["1", "0,2", "2,0931e-002", "6,5077", "2,0955"],
  ["2", "0,4", "4,1862e-002", "13,015", "4,191"],
  ["3", "0,7", "7,3258e-002", "22,777", "7,3343"],
  ["4", "1,", "0,10465", "32,539", "10,478"],
];

const orient: [string, string, boolean?][][] = [
  [["sphere", "Isometric"], ["lookAt", "Look At", true], ["views", "Views"]],
  [["prev", "Previous"], ["next", "Next", true]],
  [["rotSx", "Rotate +Sx"], ["rotSy", "Rotate +Sy"], ["rotSz", "Rotate +Sz"]],
  [["rotSx", "Rotate -Sx"], ["rotSy", "Rotate -Sy"], ["rotSz", "Rotate -Sz"]],
  [["panUp", "Pan Up"], ["panLeft", "Pan Left"], ["zIn", "Zoom In"]],
  [["panDown", "Pan Down"], ["panRight", "Pan Right"], ["zOut", "Zoom Out"]],
];

export default function App() {
  return (
    <Shell>
      <Global />
      <TitleBar>
        <Logo>M</Logo>
        <QuickSep />
        <QuickRow>
          <Icon n="save" s={14} />
          <BlackCaret />
        </QuickRow>
        <ContextTab>Context</ContextTab>
        <Title>E : Static Structural - Mechanical [ANSYS Mechanical Enterprise PrepPost]</Title>
        <WinButtons>
          <Icon n="winMin" />
          <Icon n="winRes" />
          <Icon n="closeX" />
        </WinButtons>
      </TitleBar>

      <TabRow>
        <FileTab>File</FileTab>
        <Tab $w={70}>Home</Tab>
        <Tab $w={52}>Result</Tab>
        <Tab $w={63} $ml={6} $on>Display</Tab>
        <Tab $w={78}>Selection</Tab>
        <Tab $w={88}>Automation</Tab>
        <TabSpring />
        <QuickLaunch>Quick Launch</QuickLaunch>
        <TabTools>
          <Icon n="chevGold" />
          <Icon n="prefs" />
          <Icon n="help" />
        </TabTools>
      </TabRow>

      <Ribbon>
        <Group $w={458}>
          <OrientGrid>
            {orient.map((col, ci) => (
              <Column key={ci}>
                {col.map(([n, t, off]) => (
                  <Cmd key={t} $off={off}>
                    <Icon n={n} />
                    {t}
                    {t === "Isometric" && <Caret />}
                  </Cmd>
                ))}
                {ci === 1 && (
                  <AngleCmd>
                    Angle
                    <AngleBox>10</AngleBox>
                  </AngleCmd>
                )}
              </Column>
            ))}
          </OrientGrid>
          <GroupLabel>Orient</GroupLabel>
        </Group>

        <Group $w={94}>
          <GroupBody>
            <Column $pad={10}>
              <Cmd><Icon n="random" />Random</Cmd>
              <Cmd><Icon n="rescale" />Rescale</Cmd>
              <Cmd><Icon n="prefs" />Preferences</Cmd>
            </Column>
          </GroupBody>
          <GroupLabel>Annotation</GroupLabel>
        </Group>

        <Group $w={243}>
          <GroupBody>
            <Column $pad={5} />
            <Big $w={43}><BigIcon><Icon n="cubeDark" s={32} /></BigIcon>Display<BigCaret><Caret /></BigCaret></Big>
            <Big $w={42} $off><BigIcon><Icon n="showMesh" s={30} /></BigIcon>Show<br />Mesh</Big>
            <Big $w={66}><BigIcon><Icon n="thickBeam" s={30} /></BigIcon>Thick Shells<br />and Beams</Big>
            <Big $w={38}><BigIcon><Icon n="crossSec" s={32} /></BigIcon>Cross<br />Section</Big>
            <Big $w={49}><BigIcon><Icon n="displayStyle" s={32} /></BigIcon>Display<br />Style ▾</Big>
          </GroupBody>
          <GroupLabel>Style</GroupLabel>
        </Group>

        <Group $w={111}>
          <GroupBody>
            <Column $pad={7}>
              <Cmd $pad={4}><Icon n="showV" />Show Vertices</Cmd>
              <Cmd $pad={4}><Icon n="closeV" />Close Vertices</Cmd>
              <Combo $w={99}>1,9 (Auto Scale)<Caret $c="#aaa" /></Combo>
            </Column>
          </GroupBody>
          <GroupLabel>Vertex</GroupLabel>
        </Group>

        <Group $w={224}>
          <GroupBody>
            <Column $pad={11} $w={129}>
              <Cmd><Icon n="direction" />Direction</Cmd>
              <Cmd><Icon n="meshConn" />Mesh Connection</Cmd>
              <Cmd><Icon n="thicken" />Thicken</Cmd>
            </Column>
            <Big $w={28}>
              <ColorSwatches>
                <Swatch $c="#00ff00" $b="#5a9a5a" />
                <Swatch $c="#f3c455" $b="#b8860b" />
              </ColorSwatches>
              Color
              <BigCaret><Caret /></BigCaret>
            </Big>
            <Column $pad={10}>
              <NumGrid>
                {["0", "3", "1", "x", "2"].map((t) => (
                  <NumBox key={t}>
                    <NumFace>{t}</NumFace>
                    <Caret $c="#aaa" />
                  </NumBox>
                ))}
              </NumGrid>
            </Column>
          </GroupBody>
          <GroupLabel>Edge</GroupLabel>
        </Group>

        <Group $w={203}>
          <GroupBody>
            <Column>
              <ExplodeTop>
                <Icon n="reset" />
                Reset
                <Slider><SliderThumb /></Slider>
              </ExplodeTop>
              <ExplodeBottom>
                <Icon n="assembly" />
                <Combo $w={140} $ml={4}>Assembly Center<Caret $c="#aaa" /></Combo>
              </ExplodeBottom>
            </Column>
          </GroupBody>
          <GroupLabel>Explode</GroupLabel>
        </Group>

        <Group $w={125}>
          <GroupBody>
            <Big $w={66}><BigIcon><Icon n="vp" s={34} /></BigIcon>Viewports<BigCaret><Caret /></BigCaret></Big>
            <Big $w={50} $off><BigIcon><Icon n="sync" s={34} /></BigIcon>Sync<br />Viewports</Big>
          </GroupBody>
          <GroupLabel>Viewports</GroupLabel>
        </Group>

        <Group $w={53}>
          <GroupBody>
            <Big $w={53}><BigIcon><Icon n="show" s={34} /></BigIcon>Show<BigCaret><Caret /></BigCaret></Big>
          </GroupBody>
          <GroupLabel>Display</GroupLabel>
        </Group>
      </Ribbon>

      <Workspace>
        <LeftColumn>
          <PanelHead>
            Outline
            <Grip />
            <PanelControls />
          </PanelHead>
          <OutlineBar>
            <VGrip />
            <Field $w={99}>Name<Caret /></Field>
            <Field $w={90} $muted>Search Outline</Field>
            <Column $pad={5}><Icon n="chevDown" s={14} /></Column>
            <Column $pad={10}><BlackCaret /></Column>
          </OutlineBar>
          <Tree>
            {nodes.map((r, idx) => (
              <TreeRow key={idx}>
                {r.c.split("").map((k, ci) => (
                  <Cell key={ci} $k={k}>
                    {"-+m".includes(k) && <ToggleBox $plus={k === "+"} />}
                  </Cell>
                ))}
                <StatusSlot>
                  {r.st && (
                    <StatusMark>
                      <IconSvg $s={9} viewBox="0 0 9 9">{glyphs[r.st]}</IconSvg>
                    </StatusMark>
                  )}
                </StatusSlot>
                <Icon n={r.i} />
                <NodeText $bold={r.b} $sel={r.sel}>{r.t}</NodeText>
              </TreeRow>
            ))}
          </Tree>
          <GapBar />
          <PanelHead $border>
            Details of "Total Deformation"
            <Grip />
            <PanelControls />
          </PanelHead>
          <Details>
            {dRows.map((r, i) =>
              r.g ? (
                <DetailRow key={i}>
                  <RowToggle><DetailToggle $plus={r.plus} /></RowToggle>
                  <GroupCell>{r.g}</GroupCell>
                </DetailRow>
              ) : (
                <DetailRow key={i}>
                  <RowToggle />
                  <LabelCell>
                    {r.ck && <CheckSquare />}
                    {r.l}
                  </LabelCell>
                  <ValueCell $white={r.white}>{r.v}</ValueCell>
                </DetailRow>
              )
            )}
          </Details>
        </LeftColumn>

        <Center>
          <ViewRow>
            <ViewBar>
              <VGrip />
              <ToolSlot $w={22}><Icon n="prev" /></ToolSlot>
              <ToolSlot $w={22}><Icon n="next" /></ToolSlot>
              <ToolSep />
              <ToolSlot $w={22} $on><Icon n="cubeDark" /></ToolSlot>
              <ToolSlot $w={22}><Icon n="cubeGray" /></ToolSlot>
              <ToolSlot $w={22}><Icon n="cubeParts" /></ToolSlot>
              <ToolSep />
              <ToolSlot $w={22}><Icon n="showMesh" /></ToolSlot>
              <ToolSep />
              <ToolSlot $w={33} $on><Icon n="rotate" /><Caret /></ToolSlot>
              <ToolSlot $w={22}><Icon n="pan" /></ToolSlot>
              <ToolSlot $w={22}><Icon n="zFit" /></ToolSlot>
              <ToolSlot $w={22}><Icon n="zIn" /></ToolSlot>
              <ToolSlot $w={22}><Icon n="zBlue" /></ToolSlot>
              <ToolSlot $w={22}><Icon n="zGreen" /></ToolSlot>
              <ToolSep />
              <ToolText $ml={4} $w={35}>Select</ToolText>
              <ToolText $ml={2} $w={54}><Icon n="mode" />Mode<Caret /></ToolText>
              <ToolSlot $w={23}><Icon n="selGrid" /></ToolSlot>
              <ToolSlot $w={23}><Icon n="sel0" /></ToolSlot>
              <ToolSlot $w={23}><Icon n="sel1" /></ToolSlot>
              <ToolSlot $w={23}><Icon n="sel0" /></ToolSlot>
              <ToolSlot $w={23}><Icon n="sel3" /></ToolSlot>
              <ToolSlot $w={22}><Icon n="gridBlue" /></ToolSlot>
              <ToolSlot $w={22}><Icon n="gridGreen" /></ToolSlot>
              <ToolSlot $w={22}><Icon n="gridDense" /></ToolSlot>
              <ToolSlot $w={22}><Icon n="xyz" /></ToolSlot>
              <ToolSlot $w={22}><Icon n="tag" /></ToolSlot>
              <ToolSep />
              <ToolText $ml={8} $w={88}><Icon n="clipboard" />Clipboard<Caret /></ToolText>
              <ToolText $w={51}>[ Empty ]</ToolText>
              <ToolSep />
              <ToolText $ml={4} $w={73}><Icon n="extend" />Extend<Caret /></ToolText>
              <ToolText $w={85}><Icon n="selectBy" />Select By<Caret /></ToolText>
              <ToolText $w={73}><Icon n="convert" />Convert<Caret /></ToolText>
              <BlackCaret />
            </ViewBar>
          </ViewRow>

          <Viewport>
            <Plate />
            <Legend>
              <LegendTitle>E: Static Structural</LegendTitle>
              <div>Total Deformation</div>
              <div>Type: Total Deformation</div>
              <div>Unit: mm</div>
              <div>Time: 1</div>
              <div>29.06.2021 12:56</div>
              <LegendScale>
                <ColorBar>
                  {legendColors.map((c) => (
                    <ColorStep key={c} $c={c} />
                  ))}
                </ColorBar>
                <LegendValues>
                  {legendVals.map((v, i) => (
                    <LegendValue key={v} $b={i === 0 || i === 9}>{v}</LegendValue>
                  ))}
                </LegendValues>
              </LegendScale>
            </Legend>
            <MaxFlag>Max</MaxFlag>
          </Viewport>

          <Dock>
            <GraphPanel>
              <PanelHead $border>
                Graph
                <Grip />
                <PanelControls />
              </PanelHead>
              <GraphBar>
                <VGrip />
                <ToolText $w={58}>Animation</ToolText>
                <ToolSlot $w={20}><Icon n="skipBack" /></ToolSlot>
                <ToolSlot $w={26}><Icon n="play" /></ToolSlot>
                <ToolSlot $w={22} $on><Icon n="stop" /></ToolSlot>
                <ToolSlot $w={18}><Icon n="skipFwd" /></ToolSlot>
                <ToolSep $m={4} />
                <ToolSlot $w={22} $on><Icon n="barsGreen" /></ToolSlot>
                <ToolSlot $w={20}><Icon n="barsBlue" /></ToolSlot>
                <ToolSep $m={4} />
                <GraphCombo $w={100}>20 Frames<BlackCaret /></GraphCombo>
                <GraphCombo $w={100}>2 Sec (Auto)<BlackCaret /></GraphCombo>
                <ToolSep $m={3} />
                <ToolSlot $w={24}><Icon n="film" /></ToolSlot>
                <ToolSep $m={1} />
                <ToolSlot $w={24}><Icon n="zoomGray" /></ToolSlot>
                <ToolSlot $w={20}><Icon n="colorGrid" /></ToolSlot>
                <ToolSlot $w={22}><Icon n="brush" /></ToolSlot>
                <ToolSep $m={4} />
                <ToolSlot $w={24}><Icon n="filmGray" /></ToolSlot>
                <ToolSlot $w={22}><Icon n="filmGray" /></ToolSlot>
                <ToolSep $m={1} />
                <ToolSlot $w={24}><Icon n="wave" /></ToolSlot>
                <Combo $w={58}>3 Cycles</Combo>
                <ToolSlot $w={14}><BlackCaret /></ToolSlot>
              </GraphBar>
              <GraphBody>
                <GraphChart />
                <TimeBar>1</TimeBar>
              </GraphBody>
              <TabStrip>
                <DockTab>Messages</DockTab>
                <DockTab $on>Graph</DockTab>
              </TabStrip>
            </GraphPanel>

            <TablePanel>
              <PanelHead $border>
                Tabular Data
                <Grip />
                <PanelControls />
              </PanelHead>
              <TableArea>
                <DataGrid>
                  <HeadCell />
                  <HeadCell>Time [s]</HeadCell>
                  <HeadCell $c="#d01030"><TinyCheck>✔</TinyCheck>Minimum [mm]</HeadCell>
                  <HeadCell $c="#0a9a30"><TinyCheck>✔</TinyCheck>Maximum [mm]</HeadCell>
                  <HeadCell $c="#2020e0"><TinyCheck>✔</TinyCheck>Average [mm]</HeadCell>
                  {tableRows.map((r) =>
                    r.map((v, i) =>
                      i === 0 ? <NumCell key={v}>{v}</NumCell> : <DataCell key={`${r[0]}${i}`}>{v}</DataCell>
                    )
                  )}
                </DataGrid>
              </TableArea>
            </TablePanel>
          </Dock>
        </Center>
      </Workspace>

      <StatusBar>
        <StatusItem $w={91}><Icon n="msg" s={15} />1 Message</StatusItem>
        <StatusItem $w={88}>No Selection</StatusItem>
        <StatusItem $w={188}><UpTri />Metric (mm, kg, N, s, mV, mA)</StatusItem>
        <StatusItem $w={54}>Degrees</StatusItem>
        <StatusItem $w={39}>rad/s</StatusItem>
        <StatusItem $w={40}>Celsius</StatusItem>
      </StatusBar>
      <Taskbar>
        <TaskBlock />
        <Clock>12:56</Clock>
      </Taskbar>
    </Shell>
  );
}
